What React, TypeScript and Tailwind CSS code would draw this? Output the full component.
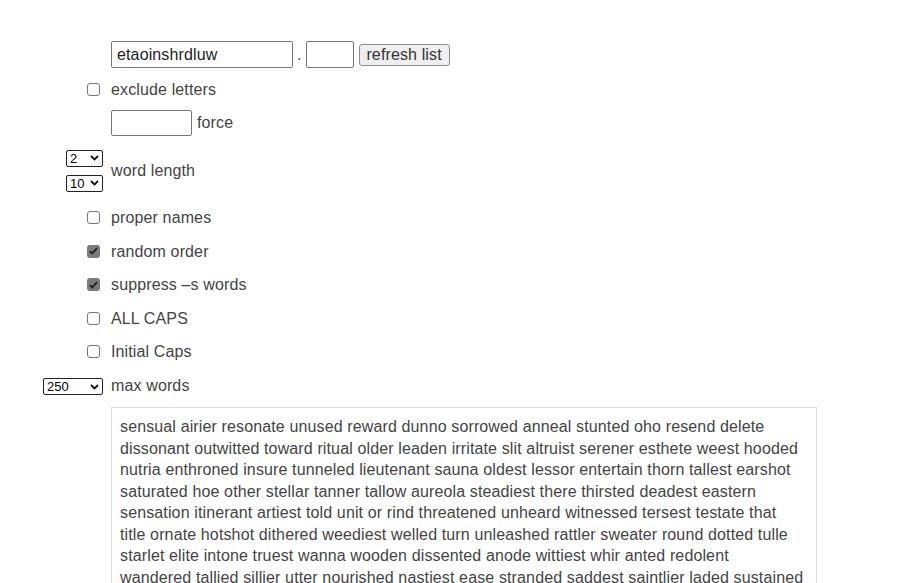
import React from "react";

const FONT = "font-['Liberation_Sans',Arial,sans-serif]";

const Chevron = () => (
  <svg width="9" height="6" viewBox="0 0 9 6" className="shrink-0">
    <path d="M1 1l3.5 3.5L8 1" fill="none" stroke="#111" strokeWidth="1.8" />
  </svg>
);

const FakeSelect = ({ value, width }: { value: string; width: string }) => (
  <div
    className={`${width} h-[17px] flex items-center justify-between border border-[#222] rounded-[2px] bg-white pl-[3px] pr-[3px] text-[13px] leading-none text-black tracking-normal`}
  >
    <span>{value}</span>
    <Chevron />
  </div>
);

const Box = ({ checked }: { checked?: boolean }) =>
  checked ? (
    <div className="w-[13px] h-[13px] rounded-[3px] bg-[#7a7a7a] flex items-center justify-center mr-[3px]">
      <svg width="9" height="8" viewBox="0 0 9 8">
        <path d="M1 4.2l2.2 2.3L8 1.2" fill="none" stroke="#1e1e1e" strokeWidth="1.8" />
      </svg>
    </div>
  ) : (
    <div className="w-[13px] h-[13px] rounded-[3px] border border-[#767676] bg-white mr-[3px]" />
  );

const Row = ({
  h,
  left,
  children,
}: {
  h: string;
  left?: React.ReactNode;
  children: React.ReactNode;
}) => (
  <div className={`grid grid-cols-[103px_1fr] gap-x-[8px] items-center ${h}`}>
    <div className="flex flex-col items-end gap-[8px]">{left}</div>
    <div className="flex items-center">{children}</div>
  </div>
);

const Label = ({ children }: { children: React.ReactNode }) => (
  <span className="pt-[1px]">{children}</span>
);

const lines = [
  "sensual airier resonate unused reward dunno sorrowed anneal stunted oho resend delete",
  "dissonant outwitted toward ritual older leaden irritate slit altruist serener esthete weest hooded",
  "nutria enthroned insure tunneled lieutenant sauna oldest lessor entertain thorn tallest earshot",
  "saturated hoe other stellar tanner tallow aureola steadiest there thirsted deadest eastern",
  "sensation itinerant artiest told unit or rind threatened unheard witnessed tersest testate that",
  "title ornate hotshot dithered weediest welled turn unleashed rattler sweater round dotted tulle",
  "starlet elite intone truest wanna wooden dissented anode wittiest whir anted redolent",
  "wandered tallied sillier utter nourished nastiest ease stranded saddest saintlier laded sustained",
  "lathered tattle standee untied resounded needier sole shattered lodestar tenet ruse ill",
];

export default function App() {
  return (
    <div className={`${FONT} w-[916px] h-[583px] overflow-hidden bg-white text-[16px] tracking-[0.13px] text-[#444] pt-[37px]`}>
      <Row h="h-[35px]">
        <div className="w-[182px] h-[27px] border border-[#767676] rounded-[2px] flex items-center px-[5px] text-[#222]">
          etaoinshrdluw
        </div>
        <span className="mx-[4px] text-[#444]">.</span>
        <div className="w-[48px] h-[27px] border border-[#767676] rounded-[2px]" />
        <div className="ml-[5px] w-[91px] h-[22px] border border-[#8f8f8f] rounded-[3px] bg-[#efefef] flex items-center justify-center text-[#333]">
          refresh list
        </div>
      </Row>
      <Row h="h-[34px]" left={<Box />}>
        <Label>exclude letters</Label>
      </Row>
      <Row h="h-[34px]">
        <div className="w-[81px] h-[26px] border border-[#767676] rounded-[2px]" />
        <span className="ml-[5px]">force</span>
      </Row>
      <Row
        h="h-[61px]"
        left={
          <>
            <FakeSelect value="2" width="w-[37px]" />
            <FakeSelect value="10" width="w-[37px]" />
          </>
        }
      >
        <Label>word length</Label>
      </Row>
      <Row h="h-[33.5px]" left={<Box />}>
        <Label>proper names</Label>
      </Row>
      <Row h="h-[33.5px]" left={<Box checked />}>
        <Label>random order</Label>
      </Row>
      <Row h="h-[33.5px]" left={<Box checked />}>
        <Label>suppress –s words</Label>
      </Row>
      <Row h="h-[33.5px]" left={<Box />}>
        <Label>ALL CAPS</Label>
      </Row>
      <Row h="h-[33.5px]" left={<Box />}>
        <Label>Initial Caps</Label>
      </Row>
      <Row h="h-[33.5px]" left={<div className="pt-[3px]"><FakeSelect value="250" width="w-[60px]" /></div>}>
        <Label>max words</Label>
      </Row>
      <div className="ml-[111px] mt-[5px] w-[706px] border border-[#dcdcdc] pl-[8px] pt-[8px] leading-[21.5px]">
        {lines.map((l, i) => (
          <div key={i} className="whitespace-nowrap">
            {l}
          </div>
        ))}
      </div>
    </div>
  );
}
